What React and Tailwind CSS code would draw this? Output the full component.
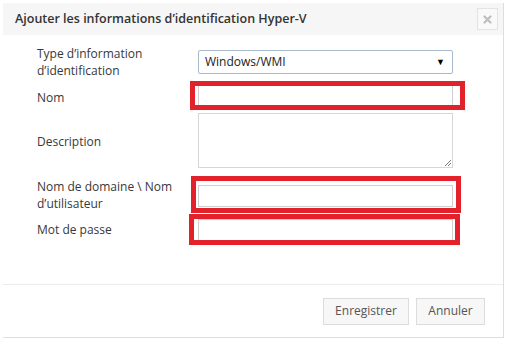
import React from 'react';

// Red annotation frame drawn over an input
const Highlight = ({ className }) => (
  <span className={`pointer-events-none absolute border-[5px] border-[#e3212b] ${className}`} />
);

const Field = ({ label, children, className = '' }) => (
  <div className={`flex ${className}`}>
    <div className="w-[195px] shrink-0 pl-[34px] text-[12px] leading-[17px] text-[#383838]">{label}</div>
    <div className="relative w-[255px] shrink-0">{children}</div>
  </div>
);

const inputCls = 'block h-[22px] w-full border border-[#cfcfcf] bg-white';

export default function App() {
  return (
    <div className="h-[341px] w-[506px] overflow-hidden bg-white font-['Open_Sans',sans-serif]">
      <div className="ml-[3px] mt-[3px] flex h-[335px] w-[501px] flex-col border-r border-b border-[#dedede] bg-white">
        {/* header */}
        <div className="flex h-[32px] items-center justify-between bg-[#f6f6f6] pl-[12px] pr-[5px]">
          <span className="text-[12.5px] font-semibold text-[#333]">
            Ajouter les informations d’identification Hyper-V
          </span>
          <span className="flex h-[22px] w-[21px] items-center justify-center border border-[#e3e3e3] bg-[#f9f9f9]">
            <svg width="9" height="9" viewBox="0 0 9 9">
              <path d="M1.5 1.5L7.5 7.5M7.5 1.5L1.5 7.5" stroke="#bdbdbd" strokeWidth="2.2" strokeLinecap="round" />
            </svg>
          </span>
        </div>

        {/* form */}
        <div className="flex flex-col pt-[10px]">
          <Field label={<>Type d’information<br />d’identification</>}>
            <div className="mt-[5px] flex h-[24px] items-center justify-between rounded-[2px] border border-[#a9b9cd] bg-white pl-[6px] pr-[7px] text-[12px] text-[#222]">
              <span>Windows/WMI</span>
              <span className="text-[9px] text-black">▼</span>
            </div>
          </Field>

          <Field label={<span className="block pt-[8px]">Nom</span>} className="mt-[2px]">
            <div className="pt-[4px]"><div className={inputCls} /></div>
            <Highlight className="-left-[8px] top-0 h-[29px] w-[275px]" />
          </Field>

          <Field label={<span className="block pt-[20px]">Description</span>} className="mt-[6px]">
            <div className="relative h-[55px] w-full border border-[#d6d6d6] bg-white">
              <svg className="absolute bottom-[1px] right-[1px]" width="7" height="7" viewBox="0 0 7 7">
                <path d="M1 7L7 1M4 7L7 4" stroke="#777" strokeWidth="1" />
              </svg>
            </div>
          </Field>

          <Field label={<span className="block pt-[2px]">Nom de domaine \ Nom<br />d’utilisateur</span>} className="mt-[8px]">
            <div className="pt-[9px]"><div className={inputCls} /></div>
            <Highlight className="-left-[7px] top-0 h-[37px] w-[270px]" />
          </Field>

          <Field label={<span className="block pt-[7px]">Mot de passe</span>} className="mt-[2px]">
            <div className="pt-[5px]"><div className={inputCls} /></div>
            <Highlight className="-left-[9px] top-0 h-[31px] w-[271px]" />
          </Field>
        </div>

        {/* footer */}
        <div className="mt-auto flex h-[53px] items-center justify-end gap-[7px] border-t border-[#ececec] pr-[18px]">
          <button className="h-[27px] w-[86px] border border-[#dcdcdc] bg-[#f7f7f7] text-[12px] text-[#555]">
            Enregistrer
          </button>
          <button className="h-[27px] w-[69px] border border-[#dcdcdc] bg-[#f7f7f7] text-[12px] text-[#555]">
            Annuler
          </button>
        </div>
      </div>
    </div>
  );
}
